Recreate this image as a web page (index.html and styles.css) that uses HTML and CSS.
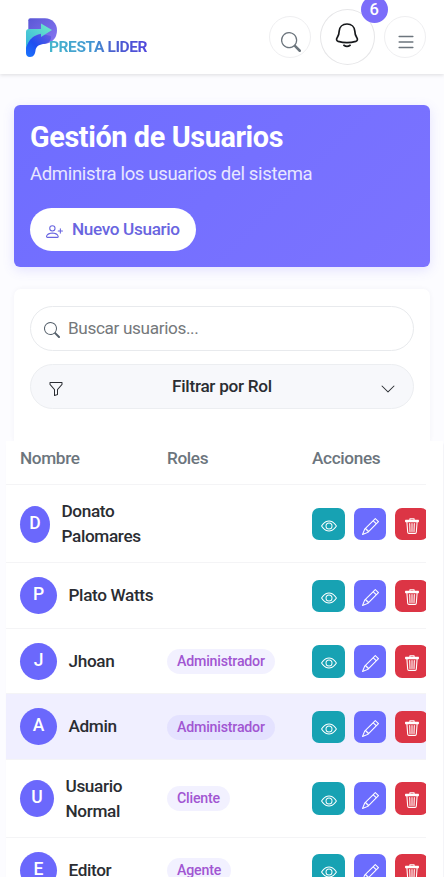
FILE: index.html
```html
<!DOCTYPE html>
<html lang="es">
<head>
<meta charset="utf-8">
<meta name="viewport" content="width=device-width, initial-scale=1">
<title>Gestión de Usuarios</title>
<link rel="stylesheet" href="styles.css">
</head>
<body>
<svg width="0" height="0" class="sprite" aria-hidden="true">
  <symbol id="search" viewBox="0 0 16 16"><path d="M11.742 10.344a6.5 6.5 0 1 0-1.397 1.398h-.001c.03.04.062.078.098.115l3.85 3.85a1 1 0 0 0 1.415-1.414l-3.85-3.85a1.007 1.007 0 0 0-.115-.1zM12 6.5a5.5 5.5 0 1 1-11 0 5.5 5.5 0 0 1 11 0z"/></symbol>
  <symbol id="bell" viewBox="0 0 24 26"><g fill="none" stroke="currentColor" stroke-width="1.7" stroke-linecap="round" stroke-linejoin="round"><path d="M12 2c4.600 0 7.500 3 7.800 7 .1 2.800.5 4.300 1.800 6.300 1.400 2.100 1 3.500-.8 4.100-5 1.400-12.600 1.400-17.600 0-1.800-.6-2.200-2-.8-4.100 1.300-2 1.700-3.500 1.800-6.300.3-4 3.200-7 7.800-7z"/><path d="M8.900 23.300c1.700 1.200 4.500 1.200 6.200 0"/></g></symbol>
  <symbol id="list" viewBox="0 0 16 16"><path fill-rule="evenodd" d="M2.500 12a.5.5 0 0 1 .5-.5h10a.5.5 0 0 1 0 1H3a.5.5 0 0 1-.5-.5zm0-4a.5.5 0 0 1 .5-.5h10a.5.5 0 0 1 0 1H3a.5.5 0 0 1-.5-.5zm0-4a.5.5 0 0 1 .5-.5h10a.5.5 0 0 1 0 1H3a.5.5 0 0 1-.5-.5z"/></symbol>
  <symbol id="person-plus" viewBox="0 0 16 16"><path d="M6 8a3 3 0 1 0 0-6 3 3 0 0 0 0 6zm2-3a2 2 0 1 1-4 0 2 2 0 0 1 4 0zm4 8c0 1-1 1-1 1H1s-1 0-1-1 1-4 6-4 6 3 6 4zm-1-.004c-.001-.246-.154-.986-.832-1.664C9.516 10.680 8.289 10 6 10c-2.290 0-3.516.68-4.168 1.332-.678.678-.83 1.418-.832 1.664h10z"/><path fill-rule="evenodd" d="M13.500 5a.5.5 0 0 1 .5.5V7h1.500a.5.5 0 0 1 0 1H14v1.500a.5.5 0 0 1-1 0V8h-1.500a.5.5 0 0 1 0-1H13V5.500a.5.5 0 0 1 .5-.5z"/></symbol>
  <symbol id="funnel" viewBox="0 0 16 16"><path d="M1.500 1.500A.5.5 0 0 1 2 1h12a.5.5 0 0 1 .5.5v2a.5.5 0 0 1-.128.334L10 8.692V13.500a.5.5 0 0 1-.342.474l-3 1A.5.5 0 0 1 6 14.500V8.692L1.628 3.834A.5.5 0 0 1 1.500 3.500v-2zm1 .5v1.308l4.372 4.858A.5.5 0 0 1 7 8.500v5.306l2-.666V8.500a.5.5 0 0 1 .128-.334L13.500 3.308V2h-11z"/></symbol>
  <symbol id="chevron" viewBox="0 0 16 16"><path fill-rule="evenodd" d="M1.646 4.646a.5.5 0 0 1 .708 0L8 10.293l5.646-5.647a.5.5 0 0 1 .708.708l-6 6a.5.5 0 0 1-.708 0l-6-6a.5.5 0 0 1 0-.708z"/></symbol>
  <symbol id="eye" viewBox="0 0 16 16"><path d="M16 8s-3-5.500-8-5.500S0 8 0 8s3 5.500 8 5.500S16 8 16 8zM1.173 8a13.133 13.133 0 0 1 1.660-2.043C4.120 4.668 5.880 3.500 8 3.500c2.120 0 3.879 1.168 5.168 2.457A13.133 13.133 0 0 1 14.828 8c-.058.087-.122.183-.195.288-.335.480-.830 1.120-1.465 1.755C11.879 11.332 10.119 12.500 8 12.500c-2.120 0-3.879-1.168-5.168-2.457A13.134 13.134 0 0 1 1.172 8z"/><path d="M8 5.500a2.500 2.500 0 1 0 0 5 2.500 2.500 0 0 0 0-5zM4.500 8a3.500 3.500 0 1 1 7 0 3.500 3.500 0 0 1-7 0z"/></symbol>
  <symbol id="pencil" viewBox="0 0 16 16"><path d="M12.146.146a.5.5 0 0 1 .708 0l3 3a.5.5 0 0 1 0 .708l-10 10a.5.5 0 0 1-.168.110l-5 2a.5.5 0 0 1-.650-.650l2-5a.5.5 0 0 1 .110-.168l10-10zM11.207 2.500 13.500 4.793 14.793 3.500 12.500 1.207 11.207 2.500zm1.586 3L10.500 3.207 4 9.707V10h.5a.5.5 0 0 1 .5.5v.5h.5a.5.5 0 0 1 .5.5v.5h.293l6.500-6.500zm-9.761 5.175-.106.106-1.528 3.821 3.821-1.528.106-.106A.5.5 0 0 1 5 12.500V12h-.5a.5.5 0 0 1-.5-.5V11h-.5a.5.5 0 0 1-.468-.325z"/></symbol>
  <symbol id="trash" viewBox="0 0 16 16"><g fill="none" stroke="currentColor" stroke-width="1.100" stroke-linecap="round" stroke-linejoin="round"><path d="M1.600 2.400h12.800v1.200H1.600zM5.900 2.200V.8h4.200v1.400M2.900 4l.8 10.300a1.200 1.200 0 0 0 1.200 1.100h6.200a1.200 1.200 0 0 0 1.200-1.100L13.100 4M5.700 5.500l.3 8M8 5.500v8M10.300 5.500l-.3 8"/></g></symbol>
</svg>

<header class="topbar">
  <div class="brand">
    <svg class="logo" viewBox="0 0 33 41" aria-hidden="true">
      <defs>
        <linearGradient id="bowl" x1="0" y1="0" x2="1" y2="1"><stop offset="0" stop-color="#5a57d6"/><stop offset="1" stop-color="#8878f2"/></linearGradient>
        <linearGradient id="arrow" x1="0" y1="1" x2="1" y2="0"><stop offset="0" stop-color="#35b4dc"/><stop offset="1" stop-color="#6fecc8"/></linearGradient>
        <linearGradient id="stem" x1="0" y1="1" x2="1" y2="0"><stop offset="0" stop-color="#1a78ff"/><stop offset=".45" stop-color="#1f4df0"/><stop offset="1" stop-color="#6a5fe0"/></linearGradient>
      </defs>
      <path fill="url(#bowl)" d="M5.300 1.300H20c7 0 12 5 12 12 0 8-5 13-13 13.700L3.300 20V3.300q0-2 2-2z"/>
      <path fill="url(#stem)" d="M1 29c2-6 7-11 16-12l9 2c1 4-3 7.700-8 8-5 1-7 3-7.500 6.500C10 37 9 40 5 40c-3 0-4-2-4-4z"/>
      <path fill="url(#arrow)" d="M1 31V15q0-3 3-3h12V6.500L27 13l-11 7v-3.200C9 18 4 21.500 1 31z"/>
    </svg>
    <span class="wordmark">PRESTA LIDER</span>
  </div>
  <nav class="tools">
    <button class="round" aria-label="Buscar"><svg class="i-search"><use href="#search"/></svg></button>
    <button class="round bell" aria-label="Notificaciones"><svg class="i-bell"><use href="#bell"/></svg><span class="count">6</span></button>
    <button class="round" aria-label="Menú"><svg class="i-list"><use href="#list"/></svg></button>
  </nav>
</header>

<main>
  <section class="hero">
    <h1>Gestión de Usuarios</h1>
    <p>Administra los usuarios del sistema</p>
    <button class="new"><svg><use href="#person-plus"/></svg>Nuevo Usuario</button>
  </section>

  <section class="card">
    <div class="field"><svg><use href="#search"/></svg><span>Buscar usuarios...</span></div>
    <div class="filter"><svg><use href="#funnel"/></svg><span>Filtrar por Rol</span><svg><use href="#chevron"/></svg></div>
  </section>

  <section class="sheet">
    <div class="rows">
      <div class="row head"><div>Nombre</div><div>Roles</div><div>Acciones</div></div>
      <div class="row tall">
        <div class="user"><span class="avatar slim">D</span><span>Donato<br>Palomares</span></div><div></div>
        <div class="acts"><i class="view"><svg><use href="#eye"/></svg></i><i class="edit"><svg><use href="#pencil"/></svg></i><i class="del"><svg><use href="#trash"/></svg></i></div>
      </div>
      <div class="row">
        <div class="user"><span class="avatar">P</span><span>Plato Watts</span></div><div></div>
        <div class="acts"><i class="view"><svg><use href="#eye"/></svg></i><i class="edit"><svg><use href="#pencil"/></svg></i><i class="del"><svg><use href="#trash"/></svg></i></div>
      </div>
      <div class="row">
        <div class="user"><span class="avatar">J</span><span>Jhoan</span></div><div><span class="role">Administrador</span></div>
        <div class="acts"><i class="view"><svg><use href="#eye"/></svg></i><i class="edit"><svg><use href="#pencil"/></svg></i><i class="del"><svg><use href="#trash"/></svg></i></div>
      </div>
      <div class="row active">
        <div class="user"><span class="avatar">A</span><span>Admin</span></div><div><span class="role">Administrador</span></div>
        <div class="acts"><i class="view"><svg><use href="#eye"/></svg></i><i class="edit"><svg><use href="#pencil"/></svg></i><i class="del"><svg><use href="#trash"/></svg></i></div>
      </div>
      <div class="row tall">
        <div class="user"><span class="avatar mid">U</span><span>Usuario<br>Normal</span></div><div><span class="role">Cliente</span></div>
        <div class="acts"><i class="view"><svg><use href="#eye"/></svg></i><i class="edit"><svg><use href="#pencil"/></svg></i><i class="del"><svg><use href="#trash"/></svg></i></div>
      </div>
      <div class="row">
        <div class="user"><span class="avatar">E</span><span>Editor</span></div><div><span class="role">Agente</span></div>
        <div class="acts"><i class="view"><svg><use href="#eye"/></svg></i><i class="edit"><svg><use href="#pencil"/></svg></i><i class="del"><svg><use href="#trash"/></svg></i></div>
      </div>
    </div>
  </section>
</main>
</body>
</html>
```
FILE: styles.css
```css
* { box-sizing: border-box; }
html, body { height: 877px; overflow: hidden; }
body { margin: 0; background: #fcfcff; color: #2a2d32; font: 500 17.2px/24.75px Roboto, sans-serif; letter-spacing: -.36px; }
svg { fill: currentColor; display: block; flex: none; }
.sprite { position: absolute; }
button { font: inherit; letter-spacing: inherit; border: 0; padding: 0; color: inherit; }

.topbar { height: 74px; padding: 0 18px 0 25px; display: flex; align-items: center; justify-content: space-between; background: #fff; box-shadow: 0 1px 4px rgba(0,0,0,.13); }
.brand { display: flex; align-items: flex-start; }
.logo { width: 33px; height: 41px; }
.wordmark { margin: 20px 0 0 -9px; font: 700 15.5px/20px Roboto, sans-serif; letter-spacing: -.4px; white-space: nowrap; color: transparent; background: linear-gradient(90deg, #45b6cc, #4296d2 45%, #4a5fcf 65%, #5148dc); -webkit-background-clip: text; background-clip: text; }
.tools { display: flex; align-items: center; gap: 9px; }
.round { width: 42px; height: 42px; border-radius: 50%; border: 1px solid #efeff1; background: #fff; color: #6c757d; display: flex; align-items: center; justify-content: center; }
.round.bell { position: relative; width: 55px; height: 56px; color: #16181b; border-color: #e6e6e8; }
.i-search { width: 20px; height: 20px; margin: 10px 0 0 2px; }
.i-bell { width: 24px; height: 26px; margin: -4px 0 0 -1px; }
.i-list { width: 22px; height: 22px; margin: 9px 0 0 1px; }
.count { position: absolute; left: 39.5px; top: -14px; width: 27px; height: 27px; border-radius: 50%; background: #7b6dfa; color: #fff; text-align: center; font: 500 16.5px/27px Roboto, sans-serif; }

.hero { margin: 31px 14px 0; height: 162px; padding: 16px; border-radius: 6px; background: linear-gradient(135deg, #6e6dff, #7c73ff); box-shadow: 0 3px 12px rgba(108,99,255,.17); color: #fff; }
.hero h1 { margin: 0; font-size: 28.8px; line-height: 33px; font-weight: 700; letter-spacing: -.38px; }
.hero p { margin: 7px 0 0; font-size: 18.5px; line-height: 27px; font-weight: 400; color: #e8e7ff; letter-spacing: -.33px; }
.new { margin-top: 20px; width: 166px; height: 43px; padding-left: 16px; border-radius: 22px; background: #fff; color: #6965e0; display: flex; align-items: center; gap: 9px; }
.new svg { width: 17px; height: 17px; margin-top: 4px; }

.card { margin: 22px 14px 0; height: 152px; padding: 17px 16px 0; border-radius: 7px 7px 0 0; background: #fff; box-shadow: 0 0 5px rgba(50,50,90,.05); }
.field, .filter { height: 45px; border: 1px solid #e8eaed; border-radius: 23px; display: flex; align-items: center; }
.field { padding-left: 13px; gap: 8px; color: #75787b; font-weight: 400; }
.field svg { width: 16px; height: 16px; color: #56616c; margin-top: 2px; }
.filter { margin-top: 13px; padding: 0 17px; justify-content: space-between; background: #f7f8fb; border-color: #eceef1; }
.filter span { letter-spacing: -.28px; }
.filter svg { width: 16px; height: 16px; margin-top: 5px; }

.sheet { position: relative; margin: 0 1px 0 6px; height: 436px; padding-right: 18px; background: #fff; box-shadow: 1px 3px 2px rgba(50,50,90,.06); }
.rows { overflow: hidden; height: 436px; margin-right: -.6px; }
.row { display: grid; grid-template-columns: 147px 145px 127px; align-items: center; height: 65.5px; padding: 1px 0 0 14px; border-bottom: 1px solid #f4f4f6; }
.row.head { height: 44px; color: #6c757d; padding-bottom: 10px; }
.row.tall { height: 78px; }
.row.active { background: #f0efff; }
.user { display: flex; align-items: center; gap: 11.5px; white-space: nowrap; }
.avatar { width: 37px; height: 37px; border-radius: 50%; background: #6b68fc; color: #fff; text-align: center; line-height: 35px; letter-spacing: 0; font-size: 17.5px; flex: none; }
.avatar.slim { width: 30px; }
.avatar.mid { width: 34px; }
.role { display: inline-block; height: 25px; padding: 0 10px; border-radius: 13px; background: rgba(108,99,255,.09); color: #a156d2; font-size: 14.2px; letter-spacing: -.2px; line-height: 24px; vertical-align: middle; }
.acts { display: flex; gap: 9.2px; }
.acts i { width: 32.5px; height: 32.5px; border-radius: 7px; color: #fff; flex: none; display: flex; align-items: center; justify-content: center; }
.acts svg { width: 16px; height: 16px; margin: 4px 0 0 2px; }
.acts .edit svg { width: 17px; height: 17px; }
.acts .view { background: #17a2b3; }
.acts .edit { background: #6b6cfd; }
.acts .del { background: #dc3545; }
.acts .del svg { width: 16px; margin: 3px 0 0; }
```
